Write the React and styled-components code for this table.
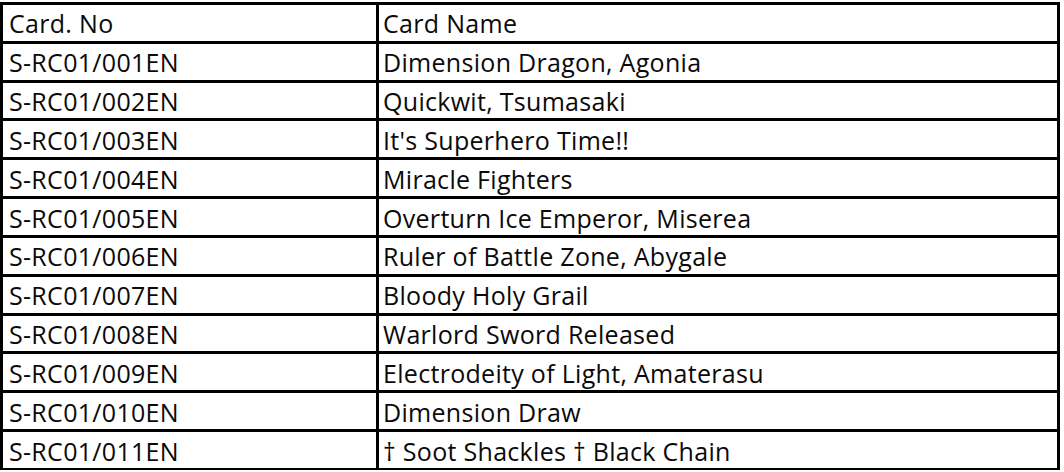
import React from "react";
import styled, { createGlobalStyle } from "styled-components";

const Global = createGlobalStyle`
  html, body { margin: 0; padding: 0; background: #ffffff; }
  body { font-family: "Open Sans", "Noto Sans", sans-serif; }
`;

const Page = styled.div`
  padding-top: 2px;
  width: 1064px;
  height: 470px;
  box-sizing: border-box;
`;

const Table = styled.div`
  display: grid;
  grid-template-columns: 373px 678px;
  grid-template-rows: repeat(12, 1fr);
  gap: 3px;
  padding: 3px;
  width: 1060px;
  height: 469px;
  box-sizing: border-box;
  background: #000000;
`;

const Cell = styled.div`
  background: #ffffff;
  display: flex;
  align-items: center;
  padding-left: ${(p) => (p.$first ? "6px" : "4px")};
  padding-top: 1px;
  font-size: 25px;
  letter-spacing: 0.3px;
  line-height: 34px;
  color: #0a0a0a;
  white-space: nowrap;
  overflow: hidden;
`;

const rows = [
  ["Card. No", "Card Name"],
  ["S-RC01/001EN", "Dimension Dragon, Agonia"],
  ["S-RC01/002EN", "Quickwit, Tsumasaki"],
  ["S-RC01/003EN", "It's Superhero Time!!"],
  ["S-RC01/004EN", "Miracle Fighters"],
  ["S-RC01/005EN", "Overturn Ice Emperor, Miserea"],
  ["S-RC01/006EN", "Ruler of Battle Zone, Abygale"],
  ["S-RC01/007EN", "Bloody Holy Grail"],
  ["S-RC01/008EN", "Warlord Sword Released"],
  ["S-RC01/009EN", "Electrodeity of Light, Amaterasu"],
  ["S-RC01/010EN", "Dimension Draw"],
  ["S-RC01/011EN", "† Soot Shackles † Black Chain"],
];

export default function App() {
  return (
    <Page>
      <Global />
      <Table>
        {rows.map(([no, name], i) => (
          <React.Fragment key={i}>
            <Cell $first>{no}</Cell>
            <Cell>{name}</Cell>
          </React.Fragment>
        ))}
      </Table>
    </Page>
  );
}
